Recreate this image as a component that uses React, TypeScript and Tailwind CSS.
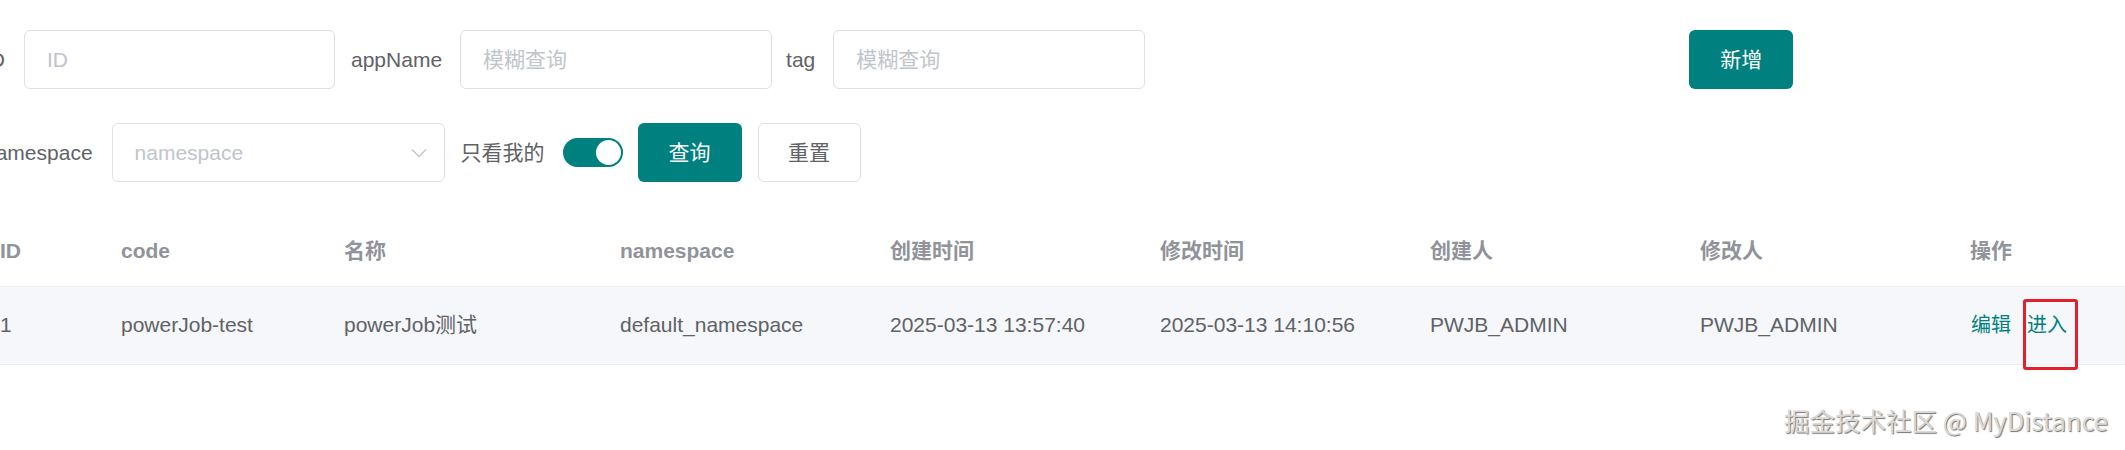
import React from "react";

const font = "font-['Liberation_Sans','Noto_Sans_CJK_SC',sans-serif]";

const cols = [
  { h: "ID", v: "1", w: "w-[121px]" },
  { h: "code", v: "powerJob-test", w: "w-[223px]" },
  { h: "名称", v: "powerJob测试", w: "w-[276px]" },
  { h: "namespace", v: "default_namespace", w: "w-[270px]" },
  { h: "创建时间", v: "2025-03-13 13:57:40", w: "w-[270px]" },
  { h: "修改时间", v: "2025-03-13 14:10:56", w: "w-[270px]" },
  { h: "创建人", v: "PWJB_ADMIN", w: "w-[270px]" },
  { h: "修改人", v: "PWJB_ADMIN", w: "w-[270px]" },
];

export default function App() {
  return (
    <div className={`h-[450px] w-full overflow-hidden bg-white ${font} text-[21px] text-[#606266]`}>
      <div className="pt-[30px]">
        {/* Row 1 */}
        <div className="-ml-[16px] flex h-[59px] items-center">
          <span className="pr-[19px] text-[#606266]">ID</span>
          <div className="flex h-[59px] w-[311px] items-center rounded-[6px] border border-[#dcdfe6] pl-[22px] text-[#c0c4cc]">
            ID
          </div>
          <span className="ml-[16px] pr-[18px]">appName</span>
          <div className="flex h-[59px] w-[312px] items-center rounded-[6px] border border-[#dcdfe6] pl-[22px] text-[#c0c4cc]">
            模糊查询
          </div>
          <span className="ml-[14px] pr-[18px]">tag</span>
          <div className="flex h-[59px] w-[312px] items-center rounded-[6px] border border-[#dcdfe6] pl-[22px] text-[#c0c4cc]">
            模糊查询
          </div>
          <div className="ml-[544px] flex h-[59px] w-[104px] items-center justify-center rounded-[6px] bg-[#00807e] text-white">
            新增
          </div>
        </div>

        {/* Row 2 */}
        <div className="-ml-[16px] mt-[34px] flex h-[59px] items-center">
          <span className="pr-[19px]">namespace</span>
          <div className="flex h-[59px] w-[333px] items-center justify-between rounded-[6px] border border-[#dcdfe6] pl-[22px] pr-[17px] text-[#c0c4cc]">
            <span>namespace</span>
            <svg width="16" height="10" viewBox="0 0 16 10" fill="none">
              <path d="M1 1.5 L8 8.5 L15 1.5" stroke="#c0c4cc" strokeWidth="1.3" />
            </svg>
          </div>
          <span className="ml-[16px] pr-[18px]">只看我的</span>
          <div className="flex h-[29px] w-[60px] items-center justify-end rounded-full bg-[#00807e] pr-[2px]">
            <div className="h-[25px] w-[25px] rounded-full bg-white" />
          </div>
          <div className="ml-[15px] flex h-[59px] w-[104px] items-center justify-center rounded-[6px] bg-[#00807e] text-white">
            查询
          </div>
          <div className="ml-[16px] flex h-[59px] w-[103px] items-center justify-center rounded-[6px] border border-[#dcdfe6] text-[#606266]">
            重置
          </div>
        </div>

        {/* Table */}
        <div className="-ml-[16px] mt-[34px]">
          <div className="flex h-[71px] items-center border-b border-[#ebeef5] font-bold text-[#909399]">
            {cols.map((c) => (
              <div key={c.h} className={`${c.w} shrink-0 pl-[16px]`}>
                {c.h}
              </div>
            ))}
            <div className="flex-1 pl-[16px]">操作</div>
          </div>
          <div className="flex h-[78px] items-center border-b border-[#ebeef5] bg-[#f5f7fa]">
            {cols.map((c) => (
              <div key={c.h} className={`${c.w} shrink-0 pl-[16px] pb-[2px]`}>
                {c.v}
              </div>
            ))}
            <div className="flex flex-1 items-center pl-[17px] pb-[2px] text-[20px] text-[#00807e]">
              <span>编辑</span>
              <span className="relative ml-[16px]">
                进入
                <span className="absolute -left-[4px] -top-[11px] h-[71px] w-[55px] rounded-[3px] border-[3px] border-[#e5202d]" />
              </span>
            </div>
          </div>
        </div>

        {/* Watermark */}
        <div className="mt-[37px] flex justify-end pr-[17px]">
          <span className="font-['Noto_Sans_CJK_SC',sans-serif] text-[25.5px] leading-[36px] text-[#d9d9d9] [text-shadow:1px_1px_1px_rgba(0,0,0,0.55)]">
            掘金技术社区 @ MyDistance
          </span>
        </div>
      </div>
    </div>
  );
}
